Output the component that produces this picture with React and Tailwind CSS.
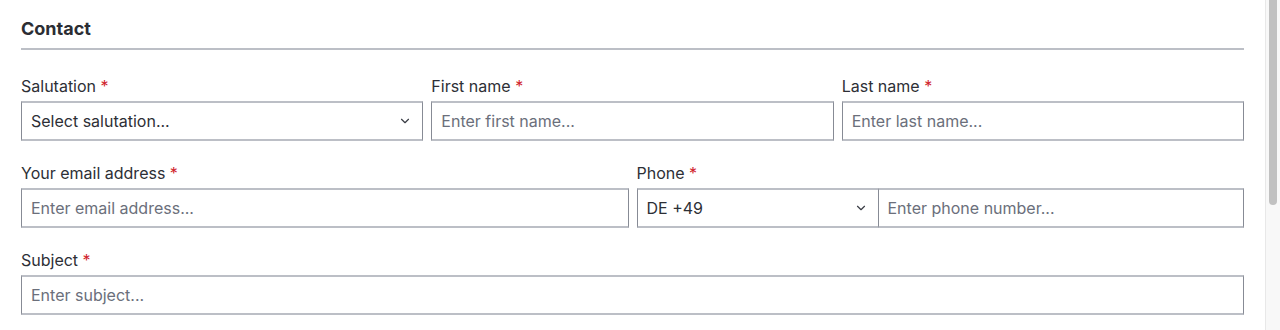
import React from "react";
import { ChevronDown } from "lucide-react";

const font = { fontFamily: "Inter, 'Noto Sans', sans-serif" };

const Label = ({ children }) => (
  <label className="block text-[16px] leading-[22px] text-[#2d2f36] mb-1">
    {children} <span className="text-[#d0222b]">*</span>
  </label>
);

const inputCls =
  "block w-full h-10 px-[9px] text-[16px] text-[#2d2f36] placeholder:text-[#6b6f7b] bg-white border-x border-y-2 border-x-[#878b95] border-y-[#bcbfc6] outline-none";

const Select = ({ value, className = "" }) => (
  <div className={`relative h-10 flex items-center px-[9px] bg-white border-x border-y-2 border-x-[#878b95] border-y-[#bcbfc6] ${className}`}>
    <span className="text-[16px] text-[#2d2f36]">{value}</span>
    <ChevronDown size={14} strokeWidth={2} className="ml-auto mr-[1px] text-[#3a3d45]" />
  </div>
);

export default function App() {
  return (
    <div style={font} className="flex h-[330px] overflow-hidden bg-white">
      <div className="flex-1 min-w-0 px-[21px] pt-[15px]">
        <h2 className="text-[18px] leading-[28px] font-bold text-[#2b2d33] pb-[5px] border-b-2 border-[#bcbfc6]">
          Contact
        </h2>

        <div className="grid grid-cols-3 gap-x-2 mt-[25px]">
          <div>
            <Label>Salutation</Label>
            <Select value="Select salutation..." />
          </div>
          <div>
            <Label>First name</Label>
            <input className={inputCls} placeholder="Enter first name..." />
          </div>
          <div>
            <Label>Last name</Label>
            <input className={inputCls} placeholder="Enter last name..." />
          </div>
        </div>

        <div className="grid grid-cols-2 gap-x-2 mt-[21px]">
          <div>
            <Label>Your email address</Label>
            <input className={inputCls} placeholder="Enter email address..." />
          </div>
          <div>
            <Label>Phone</Label>
            <div className="flex">
              <Select value="DE +49" className="w-[242px] shrink-0" />
              <input className={`${inputCls} border-l-0`} placeholder="Enter phone number..." />
            </div>
          </div>
        </div>

        <div className="mt-[21px]">
          <Label>Subject</Label>
          <input className={inputCls} placeholder="Enter subject..." />
        </div>
      </div>

      {/* scrollbar */}
      <div className="w-[15px] shrink-0 bg-[#f8f8f8] border-l border-[#e8e8e8] flex justify-center">
        <div className="w-[8px] h-[205px] bg-[#c1c1c1] rounded-b-full" />
      </div>
    </div>
  );
}
